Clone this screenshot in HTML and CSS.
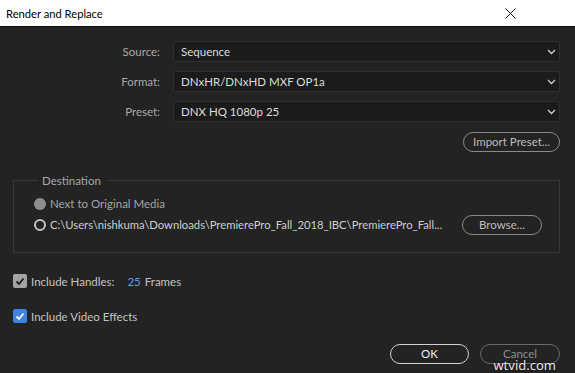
FILE: index.html
```html
<!DOCTYPE html>
<html>
<head>
<meta charset="utf-8">
<link rel="stylesheet" href="styles.css">
</head>
<body>
<div class="dialog">
  <div class="titlebar">
    <span class="title">Render and Replace</span>
    <svg class="close" width="11" height="11" viewBox="0 0 11 11"><path d="M0.5 0.5 L10.5 10.5 M10.5 0.5 L0.5 10.5" stroke="#111" stroke-width="1" fill="none"/></svg>
  </div>
  <div class="body">
    <div class="form">
      <label class="lbl">Source:</label>
      <div class="select"><span>Sequence</span><svg class="chev" width="9" height="6" viewBox="0 0 9 6"><path d="M1 1 L4.5 4.5 L8 1" stroke="#d0d0d0" stroke-width="1.3" fill="none"/></svg></div>
      <label class="lbl">Format:</label>
      <div class="select"><span>DNxHR/DNxHD MXF OP1a</span><svg class="chev" width="9" height="6" viewBox="0 0 9 6"><path d="M1 1 L4.5 4.5 L8 1" stroke="#d0d0d0" stroke-width="1.3" fill="none"/></svg></div>
      <label class="lbl">Preset:</label>
      <div class="select"><span>DNX HQ 1080p 25</span><svg class="chev" width="9" height="6" viewBox="0 0 9 6"><path d="M1 1 L4.5 4.5 L8 1" stroke="#d0d0d0" stroke-width="1.3" fill="none"/></svg></div>
    </div>
    <div class="import-row">
      <button class="btn import">Import Preset...</button>
    </div>
    <fieldset class="dest">
      <legend>Destination</legend>
      <div class="radio-row disabled"><span class="radio filled"></span><span>Next to Original Media</span></div>
      <div class="radio-row path-row">
        <span class="radio ring"></span>
        <span class="path">C:\Users\nishkuma\Downloads\PremierePro_Fall_2018_IBC\PremierePro_Fall...</span>
        <button class="btn browse">Browse...</button>
      </div>
    </fieldset>
    <div class="check-row handles">
      <span class="check gray"><svg width="10" height="9" viewBox="0 0 10 9"><path d="M1.5 4.5 L4 7 L8.5 1.5" stroke="#1c1c1c" stroke-width="1.8" fill="none"/></svg></span>
      <span>Include Handles:</span>
      <span class="num">25</span>
      <span>Frames</span>
    </div>
    <div class="check-row effects">
      <span class="check blue"><svg width="10" height="9" viewBox="0 0 10 9"><path d="M1.5 4.5 L4 7 L8.5 1.5" stroke="#f2f6ff" stroke-width="1.8" fill="none"/></svg></span>
      <span>Include Video Effects</span>
    </div>
    <div class="actions">
      <button class="btn ok">OK</button>
      <button class="btn cancel">Cancel</button>
    </div>
  </div>
  <div class="watermark">wtvid.com</div>
</div>
</body>
</html>
```

FILE: styles.css
```css
html, body {
  margin: 0;
  padding: 0;
  background: #232323;
}
.dialog {
  position: relative;
  width: 575px;
  height: 373px;
  overflow: hidden;
  background: #232323;
  font-family: Lato, "Noto Sans", sans-serif;
  font-size: 11.5px;
  color: #b9b9b9;
}
.titlebar {
  height: 26px;
  background: #ffffff;
  border-bottom: 1px solid #0c0c0c;
  display: flex;
  align-items: center;
  justify-content: space-between;
  padding: 0 59px 0 6px;
}
.title {
  font-family: Lato, sans-serif;
  font-size: 11.2px;
  color: #000;
}
.close {
  display: block;
}
.body {
  padding: 14px 15px 0 13px;
  display: flex;
  flex-direction: column;
}
.form {
  display: grid;
  grid-template-columns: 147px 1fr;
  column-gap: 13px;
  row-gap: 9px;
  align-items: center;
}
.lbl {
  text-align: right;
  color: #a9a9a9;
}
.select {
  height: 19px;
  background: #1b1b1b;
  border: 1px solid #2f2f2f;
  border-radius: 2px;
  display: flex;
  align-items: center;
  justify-content: space-between;
  padding: 0 3px 0 7px;
  color: #dcdcdc;
}
.chev {
  display: block;
}
.import-row {
  display: flex;
  justify-content: flex-end;
  margin-top: 10px;
}
.btn {
  font-family: Lato, "Noto Sans", sans-serif;
  font-size: 11.5px;
  background: transparent;
  border: 1px solid #8a8a8a;
  border-radius: 10px;
  color: #bdbdbd;
  height: 20px;
  padding: 0;
  line-height: 16px;
}
.import {
  width: 97px;
}
.dest {
  margin: 22px 0 0 0;
  border: 1px solid #373737;
  padding: 6px 0 17px 20px;
}
.dest legend {
  padding: 0 6px 0 4px;
  margin-left: 4px;
  color: #a7a7a7;
}
.radio-row {
  display: flex;
  align-items: center;
  height: 21px;
  gap: 4px;
  color: #cfcfcf;
}
.radio-row.disabled {
  color: #a5a5a5;
}
.radio {
  width: 12px;
  height: 12px;
  border-radius: 50%;
  box-sizing: border-box;
  flex: none;
}
.radio.filled {
  background: #8e8e8e;
}
.radio.ring {
  border: 2px solid #c4c4c4;
}
.path {
  flex: none;
  width: 400px;
  white-space: nowrap;
  overflow: hidden;
  font-size: 11.25px;
}
.browse {
  width: 80px;
  margin-left: 8px;
}
.check-row {
  display: flex;
  align-items: center;
  gap: 4px;
  color: #c4c4c4;
}
.handles {
  margin-top: 21px;
}
.effects {
  margin-top: 21px;
}
.check {
  width: 14px;
  height: 14px;
  border-radius: 2px;
  display: flex;
  align-items: center;
  justify-content: center;
  flex: none;
}
.check.gray {
  background: #a3a3a3;
}
.check.blue {
  background: #3f83dc;
}
.num {
  color: #5e9de8;
  margin-left: 9px;
}
.actions {
  display: flex;
  justify-content: flex-end;
  gap: 11px;
  margin-top: 21px;
}
.ok {
  width: 79px;
  border-color: #d2d2d2;
  color: #f0f0f0;
}
.cancel {
  width: 80px;
  border-color: #6a6a6a;
  color: #8d8d8d;
}
.watermark {
  position: absolute;
  right: 19px;
  bottom: -1px;
  font-family: "Noto Sans", sans-serif;
  font-size: 13px;
  color: #e8e8e8;
  text-shadow: 0 0 2px #000;
}
```
